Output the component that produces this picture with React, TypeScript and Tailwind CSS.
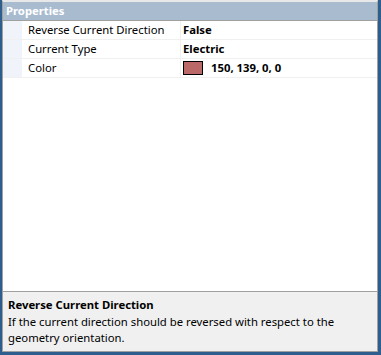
import React from "react";

const font = { fontFamily: '"Noto Sans", "Open Sans", Arial, sans-serif' };

interface Row {
  name: string;
  value: string;
  swatch?: string;
}

const rows: Row[] = [
  { name: "Reverse Current Direction", value: "False" },
  { name: "Current Type", value: "Electric" },
  { name: "Color", value: "150, 139, 0, 0", swatch: "#ba6868" },
];

function PropertyRow({ row }: { row: Row }) {
  return (
    <div className="flex h-[19px] border-b border-[#f0f0f0]">
      <div className="w-[19px] shrink-0 bg-[#f0f4fa]" />
      <div className="flex w-[159px] shrink-0 items-center border-r border-[#f0f0f0] pl-[6px] text-black">
        {row.name}
      </div>
      <div className="flex flex-1 items-center pl-[2px] font-bold text-black">
        {row.swatch && (
          <span
            className="mr-[8px] h-[14px] w-[20px] border border-black"
            style={{ backgroundColor: row.swatch }}
          />
        )}
        {row.value}
      </div>
    </div>
  );
}

export default function App() {
  return (
    <div
      className="flex h-[355px] w-[381px] bg-[#2d5e8e] pb-[3px] pl-[2px] pr-[3px] text-[11.3px]"
      style={font}
    >
      <div className="flex flex-1 flex-col border border-t-[2px] border-t-[#e8e8e8] border-[#a0a0a0] bg-white">
        <div className="flex h-[19px] items-center border-b border-[#a0a0a0] bg-[#a9bbcf] pl-[3px] pt-[1px] font-bold text-white">
          Properties
        </div>
        <div className="flex-1 bg-white">
          {rows.map((r) => (
            <PropertyRow key={r.name} row={r} />
          ))}
        </div>
        <div className="h-[2px] border-t border-[#a0a0a0] bg-[#f0f0f0]" />
        <div className="h-[58px] bg-[#f0f0f0] px-[5px] pt-[4px] leading-[16px] text-black">
          <div className="font-bold">Reverse Current Direction</div>
          <div className="mt-[1px]">
            If the current direction should be reversed with respect to the geometry orientation.
          </div>
        </div>
      </div>
    </div>
  );
}
